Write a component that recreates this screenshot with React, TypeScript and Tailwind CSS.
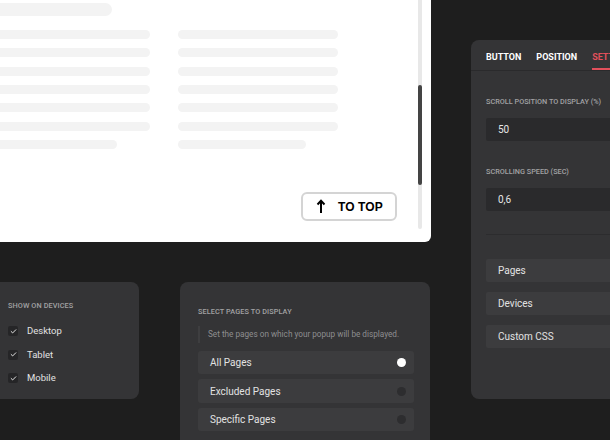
import { Check } from "lucide-react"

const font = { fontFamily: "Roboto, 'Noto Sans', sans-serif" }

function SkeletonColumn({ last }: { last: string }) {
  return (
    <div className="flex w-[160px] flex-col gap-[9.33px]">
      {[0, 1, 2, 3, 4, 5].map((i) => (
        <div key={i} className="h-[9px] w-full rounded-full bg-[#f3f3f3]" />
      ))}
      <div className={`h-[9px] rounded-full bg-[#f3f3f3] ${last}`} />
    </div>
  )
}

function PreviewPanel() {
  return (
    <div className="flex h-[262px] w-[471px] shrink-0 rounded-[6px] bg-white">
      <div className="flex flex-1 flex-col pl-[30px] pt-[23px]">
        <div className="h-[13px] w-[122px] rounded-full bg-[#f3f3f3]" />
        <div className="mt-[14px] flex gap-[28px]">
          <SkeletonColumn last="w-[127px]" />
          <SkeletonColumn last="w-[128px]" />
        </div>
        <button className="mb-[21px] mr-[21px] mt-auto flex h-[29px] w-[96px] items-center self-end rounded-[6px] border-2 border-[#d4d4d4] bg-white pl-[13px]">
          <svg width="10" height="15" viewBox="0 0 10 15" className="text-black">
            <path d="M5 14V2" stroke="currentColor" strokeWidth="2" />
            <path d="M1.5 5.5L5 1.8L8.5 5.5" stroke="currentColor" strokeWidth="2" fill="none" />
          </svg>
          <span
            className="ml-[12px] text-[12px] font-bold tracking-[0.1px] text-black"
            style={{ fontFamily: "'Liberation Sans', Arial, sans-serif" }}
          >
            TO TOP
          </span>
        </button>
      </div>
      <div className="mb-[13px] mr-[9px] w-[4px] rounded-full bg-[#e8e8e8]">
        <div className="mt-[105px] h-[100px] w-full rounded-full bg-[#444]" />
      </div>
    </div>
  )
}

function DevicesCard() {
  return (
    <div className="h-[117px] w-[179px] shrink-0 rounded-[8px] bg-[#343436] pl-[48px] pt-[19px]">
      <div className="text-[7.3px] font-medium uppercase tracking-[0.1px] text-[#a2a2a4]">Show on devices</div>
      <div className="mt-[14px] flex flex-col gap-[12.5px]">
        {["Desktop", "Tablet", "Mobile"].map((d) => (
          <div key={d} className="flex h-[11px] items-center">
            <div className="flex h-[10px] w-[10px] items-center justify-center rounded-[2px] bg-[#252527]">
              <Check className="h-[7px] w-[7px] text-white" strokeWidth={3} />
            </div>
            <span className="ml-[9px] text-[9.5px] text-[#e2e2e2]">{d}</span>
          </div>
        ))}
      </div>
    </div>
  )
}

function PagesCard() {
  const options = [
    { label: "All Pages", on: true },
    { label: "Excluded Pages", on: false },
    { label: "Specific Pages", on: false },
  ]
  return (
    <div className="h-[180px] w-[250px] shrink-0 rounded-[8px] bg-[#343436] pl-[18px] pr-[16px] pt-[25px]">
      <div className="text-[7.3px] font-medium uppercase tracking-[0.1px] text-[#a2a2a4]">Select pages to display</div>
      <div className="mt-[8px] flex h-[17px] items-center border-l-2 border-[#3e3e40] pl-[8px] text-[8.2px] text-[#8e8e90]">
        Set the pages on which your popup will be displayed.
      </div>
      <div className="mt-[8px] flex flex-col gap-[5px]">
        {options.map((o) => (
          <div key={o.label} className="flex h-[23.5px] items-center justify-between rounded-[3px] bg-[#3c3c3e] pl-[12px] pr-[8px]">
            <span className="text-[10px] text-[#e2e2e2]">{o.label}</span>
            <span className={`h-[9px] w-[9px] rounded-full ${o.on ? "bg-white" : "bg-[#2d2d2f]"}`} />
          </div>
        ))}
      </div>
    </div>
  )
}

function SettingsPanel() {
  return (
    <div className="h-[359px] w-[180px] shrink-0 rounded-[8px] bg-[#343436]">
      <div className="flex h-[31px] items-end gap-[15px] border-b border-[#2a2a2c] pl-[15px] text-[9px] font-bold">
        <span className="pb-[6px] text-white">BUTTON</span>
        <span className="pb-[6px] text-white">POSITION</span>
        <span className="border-b-2 border-[#e2505c] pb-[4px] text-[#e2505c]">SETTINGS</span>
      </div>
      <div className="px-[15px]">
        <div className="mt-[26px] text-[7.3px] font-medium uppercase text-[#a2a2a4]">Scroll position to display (%)</div>
        <div className="mt-[10px] flex h-[23px] items-center rounded-[2px] bg-[#2a2a2c] pl-[12px] text-[10px] text-[#e6e6e6]">50</div>
        <div className="mt-[26px] text-[7.3px] font-medium uppercase text-[#a2a2a4]">Scrolling speed (sec)</div>
        <div className="mt-[10px] flex h-[23px] items-center rounded-[2px] bg-[#2a2a2c] pl-[12px] text-[10px] text-[#e6e6e6]">0,6</div>
        <div className="mt-[23px] h-px bg-[#2c2c2e]" />
        <div className="mt-[24px] flex flex-col gap-[9.5px]">
          {["Pages", "Devices", "Custom CSS"].map((r) => (
            <div key={r} className="flex h-[23.5px] items-center rounded-[2px] bg-[#3c3c3e] pl-[12px] text-[10px] text-[#e2e2e2]">
              {r}
            </div>
          ))}
        </div>
      </div>
    </div>
  )
}

export default function App() {
  return (
    <div className="flex h-[440px] w-[610px] overflow-hidden bg-[#1e1e1e]" style={font}>
      <div className="-ml-[40px] -mt-[20px] flex w-[471px] shrink-0 flex-col">
        <PreviewPanel />
        <div className="mt-[40px] flex shrink-0 gap-[41px]">
          <DevicesCard />
          <PagesCard />
        </div>
      </div>
      <div className="ml-[40px] mt-[40px]">
        <SettingsPanel />
      </div>
    </div>
  )
}
